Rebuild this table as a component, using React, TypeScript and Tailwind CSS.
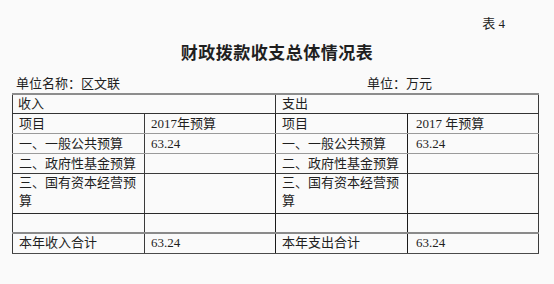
import React from 'react';

const FONT = '"Liberation Serif", "Noto Sans CJK SC", serif';
const CJK = '"Noto Sans CJK SC", sans-serif';

type Row = {
  h: string;
  cells: [string, string, string, string];
  line: string;
};

// 表格各行：左收入 / 右支出
const rows: Row[] = [
  { h: 'h-[20px]', cells: ['项目', '2017年预算', '项目', '2017 年预算'], line: 'border-b-[#9a9a9a]' },
  { h: 'h-[20px]', cells: ['一、一般公共预算', '63.24', '一、一般公共预算', '63.24'], line: 'border-b-[#9a9a9a]' },
  { h: 'h-[20px]', cells: ['二、政府性基金预算', '', '二、政府性基金预算', ''], line: 'border-b-[#3a3a3a]' },
  { h: 'h-[40px]', cells: ['三、国有资本经营预算', '', '三、国有资本经营预算', ''], line: 'border-b-[#2a2a2a]' },
  { h: 'h-[19px]', cells: ['', '', '', ''], line: 'border-b-[#8a8a8a] border-b-2' },
  { h: 'h-[21px]', cells: ['本年收入合计', '63.24', '本年支出合计', '63.24'], line: 'border-b-[#4a4a4a]' },
];

const App: React.FC = () => {
  return (
    <div className="w-[554px] h-[284px] bg-[#fafafa] text-[#1f1f1f] overflow-hidden" style={{ fontFamily: FONT }}>
      {/* 表号 */}
      <div className="pt-[16px] h-[32px] pr-[49px] flex justify-end text-[13px] leading-[16px]">
        表&nbsp;4
      </div>

      {/* 标题 */}
      <div
        className="mt-[8px] h-[24px] leading-[24px] text-center text-[17px] font-bold tracking-[0.5px]"
        style={{ fontFamily: CJK }}
      >
        财政拨款收支总体情况表
      </div>

      {/* 单位 */}
      <div className="mt-[11px] h-[16px] leading-[16px] flex text-[13px]" style={{ fontFamily: CJK }}>
        <div className="w-[367px] pl-[16px]">单位名称：区文联</div>
        <div>单位：万元</div>
      </div>

      <table className="mt-[2px] ml-[12px] w-[526px] table-fixed border-collapse text-[13px] leading-[18px]">
        <colgroup>
          <col className="w-[132px]" />
          <col className="w-[131px]" />
          <col className="w-[132px]" />
          <col className="w-[131px]" />
        </colgroup>
        <tbody>
          <tr className="h-[18px]">
            <td
              colSpan={2}
              className="border-t-2 border-t-[#8c8c8c] border-l border-l-[#3a3a3a] border-b border-b-[#333] border-r border-r-[#333] px-[5px] p-0 align-middle"
            >
              收入
            </td>
            <td
              colSpan={2}
              className="border-t-2 border-t-[#8c8c8c] border-r border-r-[#3a3a3a] border-b border-b-[#333] px-[6px] align-middle"
            >
              支出
            </td>
          </tr>
          {rows.map((r, i) => (
            <tr key={i} className={r.h}>
              {r.cells.map((c, j) => (
                <td
                  key={j}
                  className={`border-b ${r.line} border-r ${j === 1 || j === 2 ? 'border-r-[#1a1a1a]' : 'border-r-[#3a3a3a]'} ${j === 0 ? 'border-l border-l-[#3a3a3a]' : ''} ${j === 3 ? 'pl-[8px] pr-[4px]' : 'pl-[6px] pr-[4px]'} ${r.h === 'h-[40px]' ? 'align-top' : 'align-middle'} py-0 break-all`}
                >
                  {c}
                </td>
              ))}
            </tr>
          ))}
        </tbody>
      </table>
    </div>
  );
};

export default App;
